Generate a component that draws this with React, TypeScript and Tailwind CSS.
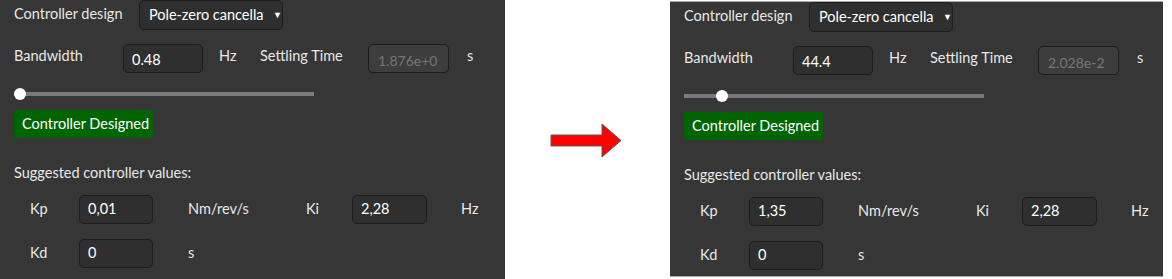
import React from 'react';

type PanelProps = {
  bandwidth: string;
  settling: string;
  kp: string;
  thumb: number;
  framed?: boolean;
};

const font = { fontFamily: 'Lato, "Noto Sans", sans-serif' };

function Field({ value, className = '' }: { value: string; className?: string }) {
  return (
    <div
      className={`flex h-[29px] items-center rounded-[5px] border border-[#1c1c1c] bg-[#2f2f2f] pl-2 text-white ${className}`}
    >
      {value}
    </div>
  );
}

function Panel({ bandwidth, settling, kp, thumb, framed }: PanelProps) {
  return (
    <div
      className={`flex flex-col bg-[#363636] text-[14.5px] text-[#e8e8e8] ${
        framed ? 'mt-[1px] h-[276px] w-[493px] border-y border-[#a9a9a9]' : 'h-[279px] w-[505px]'
      }`}
      style={font}
    >
      {/* design selector */}
      <div className="flex h-[30px] items-center pl-[14px]">
        <span className="w-[125px] -translate-y-[1px]">Controller design</span>
        <div className="flex h-[30px] w-[144px] items-center overflow-hidden rounded-[5px] border border-[#1c1c1c] bg-[#2f2f2f] pl-[9px] text-white">
          <span className="w-[116px] overflow-hidden whitespace-nowrap">Pole-zero cancellation</span>
          <span className="ml-[9px] text-[9px]">▼</span>
        </div>
      </div>

      {/* bandwidth / settling */}
      <div className="mt-[14px] flex h-[29px] items-start pl-[14px]">
        <span className="w-[109px] pt-[1px]">Bandwidth</span>
        <Field value={bandwidth} className="w-[80px] pt-[3px]" />
        <span className="ml-4 w-[41px] pt-[1px]">Hz</span>
        <span className="w-[108px] pt-[1px]">Settling Time</span>
        <div className="flex h-[29px] w-[81px] items-center rounded-[5px] border border-[#1c1c1c] bg-[#3d3d3d] pt-[3px] pl-[9px] text-[14px] text-[#767676]">
          {settling}
        </div>
        <span className="ml-[18px] pt-[1px]">s</span>
      </div>

      {/* slider */}
      <div className="mt-[15px] ml-[14px] flex h-[12px] w-[300px] items-center">
        <div className="relative h-[4px] w-full bg-[#7b7b7b]">
          <div
            className="absolute top-[-4px] h-[12px] w-[12px] rounded-full bg-white"
            style={{ left: thumb }}
          />
        </div>
      </div>

      <button className="mt-[10px] ml-[14px] h-[28px] w-[139px] whitespace-nowrap rounded-[2px] bg-[#006400] pl-2 text-left text-white">
        Controller Designed
      </button>

      <div className="mt-[24px] pl-[14px]">Suggested controller values:</div>

      {/* gains */}
      <div className="mt-[11px] flex h-[29px] items-center pl-[30px]">
        <span className="w-[49px]">Kp</span>
        <Field value={kp} className="w-[74px]" />
        <span className="ml-[35px] w-[118px]">Nm/rev/s</span>
        <span className="w-[46px]">Ki</span>
        <Field value="2,28" className="w-[75px]" />
        <span className="ml-[34px]">Hz</span>
      </div>
      <div className="mt-[15px] flex h-[29px] items-center pl-[30px]">
        <span className="w-[49px]">Kd</span>
        <Field value="0" className="w-[74px]" />
        <span className="ml-[35px]">s</span>
      </div>
    </div>
  );
}

export default function App() {
  return (
    <div className="flex h-[279px] w-[1172px] items-start bg-white">
      <Panel bandwidth="0.48" settling="1.876e+0" kp="0,01" thumb={0} />

      <div className="flex h-[279px] w-[165px] items-center pl-[45px]">
        <svg width="74" height="36" viewBox="0 0 74 36">
          <polygon
            points="1,13 52,13 52,2 71,18.5 52,35 52,24 1,24"
            fill="#ff0000"
            stroke="#5a5a5a"
            strokeWidth="1"
          />
        </svg>
      </div>

      <Panel bandwidth="44.4" settling="2.028e-2" kp="1,35" thumb={32} framed />
    </div>
  );
}
